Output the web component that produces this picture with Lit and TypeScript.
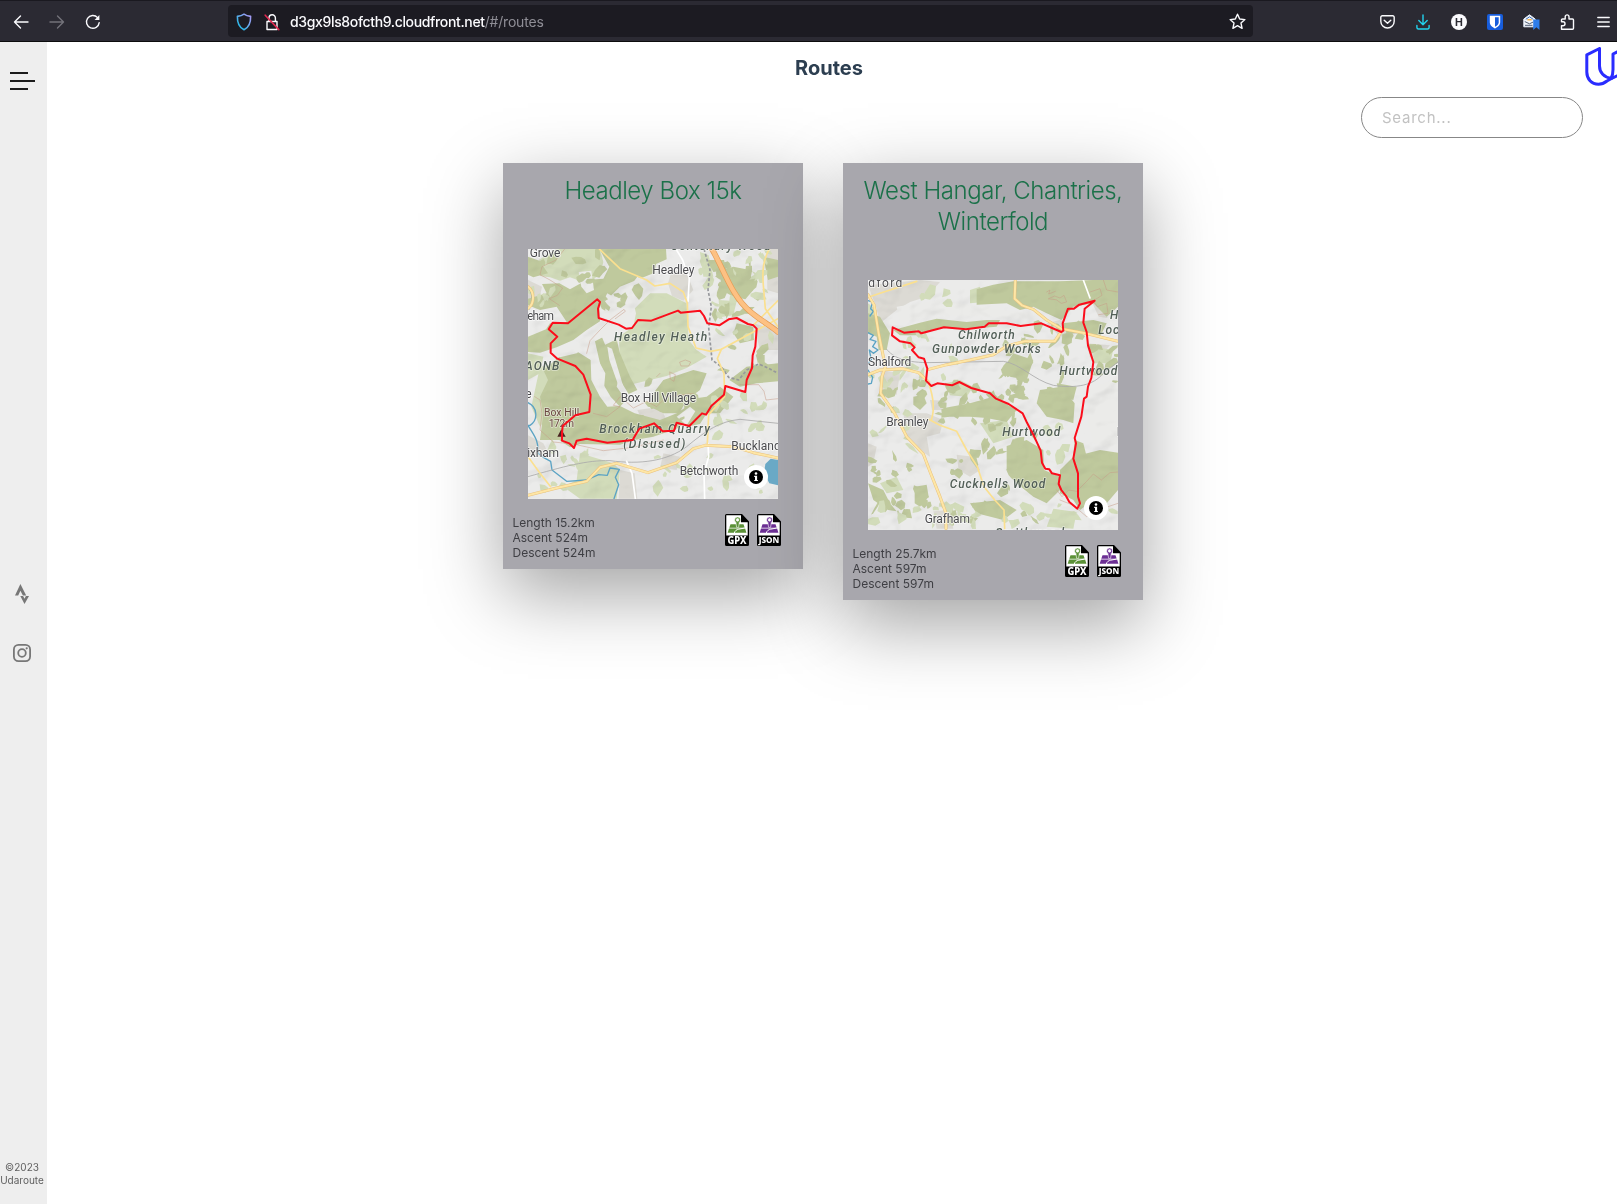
import { LitElement, html, svg, css, nothing } from "lit";
import { customElement, property } from "lit/decorators.js";

interface Label {
  text: string;
  x: number;
  y: number;
  width?: number;
  kind?: "place" | "area" | "peak";
}

interface RouteMap {
  top: number;
  wood: string[];
  field: string[];
  urban: string[];
  bare: string[];
  water: string[];
  lake: string[];
  contour: string[];
  rail: string[];
  boundary: string[];
  lane: string[];
  minor: string[];
  main: string[];
  motorway: string[];
  track: string;
  labels: Label[];
  peak?: string;
  seed: number;
  /** x, y, width, height, patch count, tone (0 wood, 1 field) */
  scatter: [number, number, number, number, number, number][];
}

interface Route {
  title: string;
  length: string;
  ascent: string;
  descent: string;
  map: RouteMap;
}

/** Small irregular patches (hedged fields, copses) spread over the given boxes. */
function scatterPatches(map: RouteMap) {
  let s = map.seed;
  const rnd = () => {
    s = (s * 16807) % 2147483647;
    return s / 2147483647;
  };
  const out: { d: string; tone: number }[] = [];
  for (const [x, y, w, h, count, tone] of map.scatter) {
    for (let i = 0; i < count; i++) {
      const cx = x + rnd() * w;
      const cy = y + rnd() * h;
      const rw = 8 + rnd() * 20;
      const rh = 5 + rnd() * 13;
      const turn = rnd() * Math.PI;
      const corners = 5 + Math.floor(rnd() * 4);
      const pts: string[] = [];
      for (let k = 0; k < corners; k++) {
        const a = ((k + rnd() * 0.5) / corners) * Math.PI * 2;
        const r = 0.55 + rnd() * 0.6;
        const px = Math.cos(a) * rw * r;
        const py = Math.sin(a) * rh * r;
        const qx = cx + px * Math.cos(turn) - py * Math.sin(turn);
        const qy = cy + px * Math.sin(turn) + py * Math.cos(turn);
        pts.push(`${qx.toFixed(0)},${qy.toFixed(0)}`);
      }
      out.push({ d: pts.join(" "), tone });
    }
  }
  return out;
}

const headley: RouteMap = {
  top: 27,
  seed: 4211,
  scatter: [
    [580, 60, 150, 180, 22, 0],
    [640, 30, 120, 330, 16, 1],
    [540, 60, 60, 250, 7, 1],
    [24, 620, 240, 150, 14, 1],
    [560, 470, 200, 120, 14, 1],
    [400, 640, 330, 130, 18, 1],
    [360, 410, 180, 130, 14, 0],
    [580, 320, 160, 90, 10, 0],
    [60, 40, 200, 120, 9, 0],
    [200, 100, 180, 120, 8, 0],
    [30, 140, 80, 70, 6, 1],
  ],
  wood: [
    "238,27 438,27 440,58 408,72 404,98 380,124 352,110 330,140 290,176 262,160 238,204 240,244 200,270 160,300 110,322 60,338 24,336 24,290 78,268 90,250 140,246 110,200 60,210 24,196 24,176 80,160 66,132 118,130 150,148 200,120 250,116 268,80",
    "24,50 58,62 84,100 40,112 24,104",
    "118,350 170,334 212,360 214,420 240,470 262,500 300,498 344,520 420,540 470,520 500,500 520,530 470,566 400,590 344,600 300,614 180,612 150,622 118,600 60,600 70,520 60,470 84,420 70,390",
    "224,300 246,292 262,330 290,350 300,400 290,440 318,480 300,500 272,470 248,430 240,370",
    "240,322 290,298 300,340 330,410 352,450 326,462 300,420 262,380",
    "430,420 520,390 560,400 540,450 500,480 478,520 430,520 390,500 400,460",
    "600,92 640,80 690,90 700,150 676,178 640,170 604,150",
    "680,380 774,370 774,424 710,430 660,440 628,420",
    "490,480 560,470 600,440 640,470 600,520 560,520 540,552 500,560",
    "560,60 612,60 620,90 580,96",
    "730,50 774,60 774,110 744,120",
    "650,250 700,260 702,300 660,310 640,280",
  ],
  field: [
    "56,60 110,27 240,27 250,66 240,104 200,130 150,112 120,122 90,112 60,108",
    "340,186 390,160 440,160 500,190 506,300 530,330 560,350 500,384 440,408 330,434 300,350 296,290 340,260 348,220",
    "60,380 110,372 100,440 120,480 90,520 60,560 34,500",
    "180,640 280,670 300,690 290,776 180,776 130,740 170,720",
    "540,36 566,46 580,110 550,110",
    "596,180 650,184 640,226 600,232",
    "24,340 70,350 60,400 24,420",
  ],
  urban: [
    "456,90 500,100 520,150 490,182 456,168 444,130",
    "24,120 66,140 60,168 24,180",
    "740,27 774,27 774,160 742,150",
    "352,510 420,500 440,540 370,550",
    "300,690 344,700 352,776 296,776",
    "700,250 774,270 774,330 720,330",
    "24,586 70,610 90,650 24,650",
    "430,640 480,650 470,690 420,684",
  ],
  bare: [
    "300,140 350,120 400,100 400,150 360,190 300,250 250,230 250,190",
    "100,330 160,318 200,290 240,250 300,250 270,280 210,312 170,340 120,352",
    "196,320 212,318 256,400 250,470 240,460 234,410",
    "262,320 276,326 316,460 340,490 320,500 300,450 268,360",
    "470,530 510,500 526,514 500,556",
    "176,96 214,92 222,150 200,160 184,140",
  ],
  water: [
    "M24,140 C40,160 40,190 26,208",
    "M24,488 C52,500 56,540 30,556 L24,556 C44,590 56,600 54,640 L70,652 L92,664 L96,690 L140,724 L200,720 L236,704 L262,706 L270,684 L298,688 L286,712 L296,734 L282,776",
  ],
  lake: ["736,672 752,656 774,660 774,736 748,730 732,700"],
  contour: [
    "M134,27 L108,60 L66,80 L60,104 L90,120 L128,144 L112,166 L88,176 L118,196",
    "M200,340 L210,302 L240,270 L270,240 L312,208 L316,214 L286,236",
    "M44,470 L60,480 L66,520 L60,570 L100,606 L160,612 L250,632 L340,622 L430,600",
    "M220,520 L260,530 L300,500 L280,496 L300,470 L340,504 L380,484 L410,500 L440,470 L520,460",
    "M410,410 L420,400 M450,396 L466,404 L462,424 L452,418Z M480,366 L496,360 L512,366 L506,378 L484,378Z",
    "M660,434 L716,434 L732,454 L738,480 L774,476",
  ],
  rail: ["M24,710 C130,680 200,660 270,662 C360,674 440,664 500,620 C560,570 600,544 660,538 L774,550"],
  boundary: [
    "M552,27 L570,90 L564,150 L574,200 L566,262 L574,340 L576,360 L604,380 L626,412 L656,420 L680,390 L716,372 L744,384 L774,400",
  ],
  lane: ["M468,27 L488,60 L496,84 L508,112 L504,184", "M554,776 L552,700 L566,650 L564,610", "M320,664 L336,700 L346,776"],
  minor: [
    "M238,27 L300,86 L380,120 L404,138 L450,130 L490,156 L502,190 L504,260 L528,324 L572,334 L604,328 L774,236",
    "M748,27 C730,60 726,90 730,136 L736,206 L774,260",
    "M774,182 L700,256",
    "M604,328 L592,356 L612,400 L614,470 L566,524 L562,610",
    "M24,650 L60,700 L92,740",
  ],
  main: ["M24,766 L110,744 L200,724 L240,682 L290,670 L384,698 L470,668 L520,626 L556,616 L640,620 L700,638 L774,654", "M24,140 C44,156 44,190 24,206"],
  motorway: ["M576,27 C612,90 636,170 690,214 C720,240 750,256 774,276"],
  track:
    "M126,580 L126,602 L148,610 L162,624 L170,602 L200,596 L262,608 L338,600 L346,586 L358,566 L402,550 L428,574 L462,572 L470,548 L508,558 L546,520 L558,524 L574,498 L612,464 L616,438 L676,456 L680,420 L696,384 L698,346 L706,320 L710,266 L700,256 L684,252 L650,234 L626,238 L598,256 L562,250 L552,228 L540,212 L482,218 L474,212 L394,242 L354,240 L336,264 L318,266 L296,254 L236,234 L234,206 L240,186 L232,178 L144,250 L98,248 L86,268 L112,290 L92,310 L92,338 L112,356 L166,378 L190,404 L212,464 L208,516 L166,526 L128,558 Z",
  peak: "112,590 124,568 137,590",
  labels: [
    { text: "Grove", x: 29, y: 49, width: 92 },
    { text: "Headley", x: 397, y: 101, width: 126 },
    { text: "Centenary Wood", x: 452, y: 28, width: 300, kind: "area" },
    { text: "eham", x: 22, y: 238, width: 80 },
    { text: "Headley Heath", x: 282, y: 303, width: 280, kind: "area" },
    { text: "AONB", x: 15, y: 388, width: 103, kind: "area" },
    { text: "e", x: 16, y: 474 },
    { text: "Box Hill Village", x: 302, y: 484, width: 226 },
    { text: "Box Hill", x: 72, y: 528, width: 106, kind: "peak" },
    { text: "172m", x: 86, y: 559, width: 76, kind: "peak" },
    { text: "Brockham Quarry", x: 238, y: 579, width: 332, kind: "area" },
    { text: "(Disused)", x: 310, y: 624, width: 186, kind: "area" },
    { text: "ixham", x: 22, y: 651, width: 95 },
    { text: "Buckland", x: 634, y: 630, width: 148 },
    { text: "Betchworth", x: 479, y: 703, width: 176 },
  ],
};

const hangar: RouteMap = {
  top: 30,
  seed: 918,
  scatter: [
    [240, 350, 250, 110, 26, 0],
    [420, 260, 190, 130, 22, 0],
    [60, 340, 140, 90, 10, 0],
    [30, 560, 180, 200, 24, 0],
    [250, 540, 290, 220, 22, 0],
    [430, 200, 200, 80, 12, 0],
    [690, 220, 80, 130, 9, 0],
    [30, 300, 130, 260, 13, 1],
    [120, 190, 170, 150, 14, 1],
    [360, 440, 170, 180, 14, 0],
    [500, 160, 180, 60, 10, 0],
    [30, 700, 730, 70, 26, 1],
    [180, 60, 120, 80, 5, 1],
    [560, 440, 90, 120, 5, 1],
  ],
  wood: [
    "350,58 400,44 460,34 600,34 700,30 774,30 774,110 740,140 700,100 640,110 604,150 560,130 520,110 480,120 440,100 350,104",
    "100,180 180,158 230,146 320,156 380,150 420,150 410,170 330,176 240,172 180,196 120,196",
    "24,130 60,140 90,190 80,240 56,240 50,200 24,190",
    "440,528 500,510 550,540 552,600 600,620 600,660 560,700 520,680 470,640 440,600",
    "600,600 640,560 720,540 774,548 774,660 740,700 700,690 660,720 640,690 600,670",
    "640,560 644,510 670,520 680,560",
    "540,360 604,350 644,400 640,460 610,450 560,440 530,400",
    "252,414 330,400 400,380 470,420 440,456 380,444 330,440 260,440",
    "606,160 700,150 740,160 720,200 660,190 620,190",
    "160,380 190,374 200,400 180,420 160,404",
    "460,250 520,270 500,330 450,320 440,280",
    "24,640 70,660 90,700 110,724 84,720 40,690",
    "164,650 200,644 206,680 180,710 164,700",
    "330,700 420,690 470,720 430,750 350,730",
    "590,340 650,350 640,390 600,380",
  ],
  field: [
    "330,60 360,50 372,96 330,100",
    "256,340 300,330 340,350 320,380 270,376",
    "60,640 110,620 130,660 80,670",
    "580,716 650,726 640,776 560,770",
    "24,100 50,120 40,160 24,160",
    "360,460 440,450 460,500 400,520",
    "700,230 760,240 750,280 700,280",
  ],
  urban: [
    "24,46 180,30 240,36 200,80 150,96 110,120 60,160 48,110",
    "60,300 120,310 110,374 70,366",
    "130,430 200,430 250,450 240,490 200,500 210,560 180,540 140,500",
    "290,554 340,560 360,600 330,620 296,600",
    "24,520 50,530 40,580 24,590",
    "210,390 258,392 250,420 216,420",
    "560,160 600,150 660,190 600,200",
    "680,220 750,226 720,260 690,262",
    "690,84 738,84 742,144 716,140",
    "220,724 270,720 280,776 230,776",
  ],
  bare: ["110,110 240,90 420,120 540,130 520,146 400,140 220,136 120,160", "690,360 774,320 774,540 700,520 680,440"],
  water: [
    "M24,92 L38,96 L32,116 L40,124 L30,138",
    "M24,188 L40,196 L30,208 L48,214 L38,230 L54,240 L40,250 L28,240 L34,270 L24,280",
    "M24,300 L38,322 L34,340 L24,342",
  ],
  lake: [],
  contour: [
    "M560,66 L570,60 L566,72 L586,64 M566,86 L584,78 L600,84 L612,76 L620,96 L604,100 L590,90 Z",
    "M690,66 L720,56 L726,76 L700,92 L712,110 L740,100 L744,130 L716,134",
    "M590,660 L606,680 L626,660 L650,664 L680,634 L700,612 L724,630 L750,608 L774,606",
    "M600,690 L640,706 L680,740 L714,720 L774,700",
    "M730,30 L740,60 L774,66",
  ],
  rail: ["M80,238 C100,262 130,276 200,278 L430,274 C480,280 520,330 580,346 C650,356 700,346 730,310 L774,276"],
  boundary: [],
  lane: ["M670,30 L690,84"],
  minor: [
    "M214,450 C224,420 220,380 206,340",
    "M206,448 L240,466 L290,484 L320,540 L352,590 L372,650 L404,690 L432,720 L434,776",
    "M24,82 L60,70 L170,34",
  ],
  main: [
    "M24,74 L42,104 L56,190 L76,290 L66,320 L62,370 L104,430 L140,500 L190,552 L212,610 L240,680 L258,730 L258,776",
    "M24,314 L60,300 L128,296 L176,308 L206,336",
    "M206,298 L260,284 L330,270 L400,254 L440,228 L494,214 L584,214 L604,184",
    "M466,30 L464,86 L486,106 L520,118 L560,150 L604,176 L676,190 L774,214",
  ],
  motorway: [],
  track:
    "M98,172 L132,188 L176,184 L184,190 L252,172 L318,178 L374,170 L386,160 L440,160 L482,168 L544,160 L604,186 L610,182 L608,160 L624,116 L642,116 L658,104 L704,92 L674,116 L670,158 L680,186 L684,226 L700,276 L694,324 L684,350 L680,380 L672,386 L664,440 L644,504 L648,520 L640,566 L654,610 L654,680 L660,700 L652,716 L628,696 L618,678 L604,660 L596,642 L600,616 L576,610 L568,598 L556,596 L546,578 L542,542 L520,494 L500,456 L488,430 L446,402 L408,386 L390,370 L334,354 L298,336 L276,346 L232,340 L214,348 L198,332 L202,296 L192,266 L176,262 L156,240 L164,232 L152,220 L120,214 L96,196 Z",
  labels: [
    { text: "dford", x: 25, y: 49, width: 102 },
    { text: "Chilworth", x: 294, y: 206, width: 170, kind: "area" },
    { text: "Gunpowder Works", x: 216, y: 249, width: 326, kind: "area" },
    { text: "H", x: 750, y: 147, kind: "area" },
    { text: "Loc", x: 715, y: 190, width: 62, kind: "area" },
    { text: "Shalford", x: 24, y: 288, width: 130 },
    { text: "Hurtwood", x: 598, y: 315, width: 174, kind: "area" },
    { text: "Bramley", x: 79, y: 468, width: 126 },
    { text: "Hurtwood", x: 427, y: 498, width: 174, kind: "area" },
    { text: "H", x: 770, y: 498, kind: "place" },
    { text: "Cucknells Wood", x: 269, y: 652, width: 287, kind: "area" },
    { text: "Grafham", x: 194, y: 758, width: 136 },
    { text: "Smithwood", x: 406, y: 800, width: 206, kind: "area" },
  ],
};

const routes: Route[] = [
  { title: "Headley Box 15k", length: "15.2km", ascent: "524m", descent: "524m", map: headley },
  { title: "West Hangar, Chantries, Winterfold", length: "25.7km", ascent: "597m", descent: "597m", map: hangar },
];

@customElement("route-map")
class RouteMapView extends LitElement {
  @property({ attribute: false }) map!: RouteMap;

  static styles = css`
    :host { display: block; width: 250px; height: 250px; position: relative; }
    .canvas { display: block; width: 250px; height: 250px; background: #ebebea; }
    .wood { fill: #bfc99d; }
    .field { fill: #d2dcba; }
    .urban { fill: #dcdad4; }
    .bare { fill: #ebebe9; }
    .lake { fill: #6aa9c6; }
    .line { fill: none; stroke-linejoin: round; stroke-linecap: round; }
    .water { stroke: #5ba3c4; stroke-width: 4; }
    .contour { stroke: #c79a86; stroke-width: 2; opacity: 0.75; }
    .rail { stroke: #a9a9a9; stroke-width: 2.5; }
    .boundary { stroke: #96989c; stroke-width: 5; stroke-dasharray: 9 6; stroke-linecap: butt; }
    .lane { stroke: #fff; stroke-width: 5; }
    .minor { stroke: #fbe08f; stroke-width: 5; }
    .case { stroke: #e9c27e; stroke-width: 9; }
    .main { stroke: #fee6a5; stroke-width: 6; }
    .mcase { stroke: #e49b55; stroke-width: 17; }
    .motorway { stroke: #fdc183; stroke-width: 13; }
    .track { stroke: #fb0d1b; stroke-width: 6; }
    .peak-mark { fill: #4a2420; }
    .relief { opacity: 0.16; mix-blend-mode: multiply; }
    .label {
      font-family: Roboto, "Liberation Sans", sans-serif;
      paint-order: stroke; stroke: rgba(255, 255, 255, 0.75); stroke-width: 5; stroke-linejoin: round;
    }
    .place { font-size: 36px; fill: #4b4b4e; }
    .area { font-size: 36px; font-style: italic; font-weight: 500; fill: #525f57; stroke: rgba(255, 255, 255, 0.45); }
    .peak { font-size: 31px; fill: #6b4640; stroke: rgba(255, 255, 255, 0.5); }
    .info {
      position: absolute; right: 10px; bottom: 10px; width: 24px; height: 24px; padding: 0;
      border: 0; border-radius: 50%; background: #fff; display: grid; place-items: center;
    }
  `;

  private lines(kind: string, paths: string[]) {
    return paths.map((d) => svg`<path class="line ${kind}" d=${d}></path>`);
  }

  private areas(kind: string, shapes: string[]) {
    return shapes.map((p) => svg`<polygon class=${kind} points=${p}></polygon>`);
  }

  render() {
    const m = this.map;
    return html`
      <svg class="canvas" viewBox="24 ${m.top} 750 750">
        <defs>
          <filter id="relief" x="0" y="0" width="100%" height="100%">
            <feTurbulence type="fractalNoise" baseFrequency="0.009 0.012" numOctaves="3" seed=${m.seed % 97}></feTurbulence>
            <feDiffuseLighting surfaceScale="26" diffuseConstant="1.15" lighting-color="#fff">
              <feDistantLight azimuth="225" elevation="58"></feDistantLight>
            </feDiffuseLighting>
          </filter>
        </defs>
        ${this.areas("urban", m.urban)} ${this.areas("field", m.field)} ${this.areas("wood", m.wood)}
        ${this.areas("bare", m.bare)}
        ${scatterPatches(m).map((p) => svg`<polygon class=${p.tone ? "field" : "wood"} points=${p.d}></polygon>`)}
        <rect class="relief" x="24" y=${m.top} width="750" height="750" filter="url(#relief)"></rect>
        ${this.areas("lake", m.lake)} ${this.lines("contour", m.contour)} ${this.lines("water", m.water)}
        ${this.lines("rail", m.rail)} ${this.lines("boundary", m.boundary)} ${this.lines("lane", m.lane)}
        ${this.lines("minor", m.minor)} ${this.lines("case", m.main)} ${this.lines("main", m.main)}
        ${this.lines("mcase", m.motorway)} ${this.lines("motorway", m.motorway)}
        ${m.labels.map(
          (l) => svg`<text class="label ${l.kind ?? "place"}" x=${l.x} y=${l.y + 1} textLength=${l.width ?? nothing}>${l.text}</text>`,
        )}
        ${m.peak ? svg`<polygon class="peak-mark" points=${m.peak}></polygon>` : nothing}
        ${this.lines("track", [m.track])}
      </svg>
      <button class="info" aria-label="Info">
        <svg width="14" height="14" viewBox="0 0 14 14">
          <circle cx="7" cy="7" r="7" fill="#000"></circle>
          <circle cx="7" cy="3.5" r="1.3" fill="#fff"></circle>
          <path d="M5.200 5.700h2.900v4.200h.8v1.200H5.200V9.900h.8V6.900h-.8z" fill="#fff"></path>
        </svg>
      </button>
    `;
  }
}

@customElement("file-icon")
class FileIcon extends LitElement {
  @property() label = "";
  @property() tint = "";

  static styles = css`
    :host { display: block; width: 24px; height: 32px; }
    .icon { display: block; }
    .text { font-family: "Noto Sans", Inter, sans-serif; font-weight: 800; fill: #fff; }
  `;

  render() {
    const wide = this.label.length > 3;
    return html`<svg class="icon" width="24" height="32" viewBox="0 0 24 32">
      <path d="M1.500 0H17l7 7.500V30.500a1.500 1.500 0 0 1-1.500 1.500h-21A1.500 1.500 0 0 1 0 30.500v-29A1.500 1.500 0 0 1 1.500 0z" fill="#000"></path>
      <path d="M1.300 1.300H16V8.200h6.700V21.500H1.300z" fill="#fff"></path>
      <g fill=${this.tint}>
        <path d="M5.500 10.300h13l1.200 3.400H4.300zM4 14.500h16.100l1.300 4.300H2.700z"></path>
        <path d="M12.600 2.900a3 3 0 0 1 1.700 5.500l-.7 5h-2L10.900 8.400a3 3 0 0 1 1.700-5.500zm0 1.700a1.300 1.300 0 1 0 0 2.600 1.300 1.300 0 0 0 0-2.600z" fill-rule="evenodd" stroke="#fff" stroke-width="0.600"></path>
      </g>
      <path d="M9.300 19c.8-2.600 2.300-3.300 4.400-3.800l6-1.200" stroke="#fff" stroke-width="1" fill="none"></path>
      <text class="text" x="12" y=${wide ? 29.4 : 30.2} text-anchor="middle" font-size=${wide ? 8 : 10.4}
        textLength=${wide ? 20.6 : 19} lengthAdjust="spacingAndGlyphs">${this.label}</text>
    </svg>`;
  }
}

@customElement("route-card")
class RouteCard extends LitElement {
  @property({ attribute: false }) route!: Route;

  static styles = css`
    :host {
      display: flex; flex-direction: column; width: 300px; box-sizing: border-box;
      background: #a8a7ad; box-shadow: rgba(0, 0, 0, 0.36) 0 25px 70px 0;
    }
    .title {
      margin: 0; padding: 12px 10px 43px; text-align: center; color: #1b7149;
      font: 300 24px/31px Inter, "Liberation Sans", sans-serif; letter-spacing: -0.45px;
    }
    .map { align-self: center; }
    .foot { display: flex; justify-content: space-between; padding: 15px 22px 9px 9.5px; }
    .stats { margin-top: 1px; font: 400 12px/15px Inter, sans-serif; color: #3f3f44; letter-spacing: 0; }
    .files { display: flex; gap: 8px; }
  `;

  render() {
    const r = this.route;
    return html`
      <h2 class="title">${r.title}</h2>
      <route-map class="map" .map=${r.map}></route-map>
      <div class="foot">
        <div class="stats">
          <div>Length ${r.length}</div>
          <div>Ascent ${r.ascent}</div>
          <div>Descent ${r.descent}</div>
        </div>
        <div class="files">
          <file-icon label="GPX" tint="#5b9137"></file-icon>
          <file-icon label="JSON" tint="#6c2f94"></file-icon>
        </div>
      </div>
    `;
  }
}

@customElement("browser-bar")
class BrowserBar extends LitElement {
  static styles = css`
    :host {
      display: flex; align-items: center; height: 42px; box-sizing: border-box; background: #2b2a33;
      border-top: 1px solid #1a1920; border-bottom: 1px solid #0c0c0d; padding-left: 3px; overflow: hidden;
      color: #fbfbfe;
    }
    .btn { flex: none; width: 36px; display: grid; place-items: center; padding-top: 1px; }
    .dim { color: #73727a; }
    .cyan { color: #22d3ee; }
    .stroke { fill: none; stroke: currentColor; stroke-width: 1.4; stroke-linecap: round; stroke-linejoin: round; }
    .address {
      flex: none; display: flex; align-items: center; width: 1025px; height: 32px; box-sizing: border-box;
      margin: 0 116px 0 117px; padding: 1px 7px 0 8px; border-radius: 4px; background: #1c1b22;
    }
    .lock { margin-left: 12px; }
    .url { margin-left: 10px; padding-top: 1px; font: 500 14px/20px Inter, sans-serif; letter-spacing: -0.35px; flex: 1; }
    .path { color: #8f8e96; font-weight: 400; letter-spacing: -0.2px; }
    .glyph { font: 700 10.500px Inter, sans-serif; fill: #2b2a33; }
  `;

  render() {
    return html`
      <div class="btn"><svg class="stroke" width="16" height="16" viewBox="0 0 16 16"><path d="M15 8H1.500M7.500 2l-6 6 6 6"></path></svg></div>
      <div class="btn dim"><svg class="stroke" width="16" height="16" viewBox="0 0 16 16"><path d="M1 8h13.500M8.500 2l6 6-6 6"></path></svg></div>
      <div class="btn"><svg class="stroke" width="16" height="16" viewBox="0 0 16 16"><path d="M14.200 8.600A6.400 6.400 0 1 1 12.600 3.600"></path><path d="M14.400 1v5H9.600z" fill="currentColor" stroke="none"></path></svg></div>
      <div class="address">
        <svg class="stroke" width="16" height="18" viewBox="0 0 16 18">
          <defs><linearGradient id="sh" x1="0" y1="1" x2="1" y2="0"><stop offset="0.2" stop-color="#2bb7e6"></stop><stop offset="0.9" stop-color="#a49bf5"></stop></linearGradient></defs>
          <path d="M8 1.200C6.400 2.400 4 3.200 1.400 3.400c-.2 6 1.600 11 6.600 13.400 5-2.400 6.800-7.400 6.600-13.400C12 3.200 9.600 2.400 8 1.200z" stroke="url(#sh)" stroke-width="1.600"></path>
        </svg>
        <svg class="stroke lock" width="16" height="18" viewBox="0 0 16 18">
          <path d="M3 8.500h10v8H3zM5 8.500V5a3.200 3.200 0 0 1 6.400 0v3.500"></path>
          <path d="M1.200 2.200l13.600 14.400" stroke="#e22850" stroke-width="1.600"></path>
        </svg>
        <span class="url">d3gx9ls8ofcth9.cloudfront.net<span class="path">/#/routes</span></span>
        <svg class="stroke" width="17" height="17" viewBox="0 0 17 17"><path d="M8.500 1.200l2.200 4.800 5.200.6-3.900 3.500 1.100 5.200-4.600-2.700-4.600 2.700L5 10.100 1.100 6.600 6.300 6z"></path></svg>
      </div>
      <div class="btn"><svg class="stroke" width="15" height="14" viewBox="0 0 15 14"><path d="M2.300.8h10.400a1.500 1.500 0 0 1 1.500 1.500v4a6.700 6.700 0 0 1-13.400 0v-4A1.500 1.500 0 0 1 2.300.8zM4.200 5.200l3.300 3.100 3.300-3.100"></path></svg></div>
      <div class="btn cyan"><svg class="stroke" width="14" height="16" viewBox="0 0 14 16"><path d="M7 1v9.500M2.800 6.500L7 10.700l4.200-4.200M.9 11.500v2a1.500 1.500 0 0 0 1.500 1.500h9.200a1.500 1.500 0 0 0 1.500-1.500v-2"></path></svg></div>
      <div class="btn"><svg width="16" height="16" viewBox="0 0 16 16"><circle cx="8" cy="8" r="8" fill="#fbfbfe"></circle><text class="glyph" x="8" y="11.800" text-anchor="middle">H</text></svg></div>
      <div class="btn"><svg width="16" height="16" viewBox="0 0 16 16"><rect width="16" height="16" rx="2" fill="#175ddc"></rect><path d="M2.800 1.800h10.400v6.400c0 3-2.600 4.900-5.200 6.200-2.600-1.300-5.200-3.200-5.200-6.200z" fill="#fff"></path><path d="M8 3.300h3.700v4.900c0 2-1.800 3.500-3.700 4.500z" fill="#175ddc"></path></svg></div>
      <div class="btn"><svg width="17" height="16" viewBox="0 0 17 16" fill="none">
        <path d="M.8 5L6.500.8 12.200 5v7.800H.8z" fill="#f3f6fb" stroke="#e4ecf8"></path>
        <path d="M2.800 5.300L6.500 2.800l3.700 2.500" stroke="#3c6eb4"></path><path d="M4.300 5.800h4.400" stroke="#f0a42c" stroke-width="1.200"></path>
        <path d="M1.800 7.600l4.700 2.200 3.500-1.700M2 11.300h7.500" stroke="#3b4a63" stroke-width="0.900"></path><path d="M10.200 5.500h6.300v10.500l-3.150-2.800-3.150 2.800z" fill="#2f7de9"></path></svg></div>
      <div class="btn"><svg class="stroke" width="15" height="16" viewBox="0 0 15 16"><path d="M1.500 15.200h11a1 1 0 0 0 1-1V6a1 1 0 0 0-1-1H9V2.800a1.900 1.900 0 0 0-3.800 0V5H2.500a1 1 0 0 0-1 1v1.800H3a2 2 0 0 1 0 4H1.500z"></path></svg></div>
      <div class="btn"><svg class="stroke" width="13" height="12" viewBox="0 0 13 12"><path d="M.8 1.500h11.400M.8 6h11.400M.8 10.500h11.400"></path></svg></div>
    `;
  }
}

@customElement("side-rail")
class SideRail extends LitElement {
  static styles = css`
    :host {
      flex: none; display: flex; flex-direction: column; width: 47px; box-sizing: border-box;
      background: #eee; padding: 30px 0 17px; color: #777;
    }
    .menu { display: flex; flex-direction: column; gap: 6px; padding-left: 10px; }
    .line { height: 2px; width: 18px; background: #1b1b1b; }
    .long { width: 25px; }
    .social { display: flex; flex-direction: column; align-items: center; gap: 40px; width: 44px; margin-top: 494px; }
    .glyph { display: block; }
    .note { margin-top: auto; width: 44px; text-align: center; white-space: nowrap; font: 400 10px/13px Inter, sans-serif; color: #5f5f5f; }
  `;

  render() {
    return html`
      <div class="menu"><div class="line"></div><div class="line long"></div><div class="line"></div></div>
      <div class="social">
        <svg class="glyph" width="14" height="20" viewBox="0 0 14 20" fill="#777">
          <path d="M5.400 0L11.200 11.500H7.900L5.400 6.700 3.200 11.500H0z"></path>
          <path d="M5.300 11.900h2.800l1.400 2.800 1.400-2.800H14L9.500 20z"></path>
        </svg>
        <svg class="glyph" width="18" height="18" viewBox="0 0 18 18" fill="none" stroke="#777" stroke-width="1.800">
          <rect x="0.900" y="0.900" width="16.200" height="16.200" rx="4.600"></rect>
          <circle cx="9" cy="9" r="3.800"></circle><circle cx="13.700" cy="4.300" r="1.100" fill="#777" stroke="none"></circle>
        </svg>
      </div>
      <div class="note">©2023<br />Udaroute</div>
    `;
  }
}

@customElement("app-root")
class AppRoot extends LitElement {
  static styles = css`
    :host {
      display: flex; flex-direction: column; width: 1617px; height: 1204px; overflow: hidden;
      background: #fff; font-family: Inter, "Liberation Sans", sans-serif;
    }
    .body { flex: 1; display: flex; min-height: 0; }
    .page { flex: 1; min-width: 0; display: flex; flex-direction: column; overflow: hidden; }
    .header { display: grid; grid-template-columns: 1fr auto 1fr; height: 55px; margin-left: -6px; align-items: start; }
    .heading { grid-column: 2; margin: 14px 0 0; font: 700 20px/24px Inter, sans-serif; color: #2c3e50; }
    .logo { justify-self: end; margin: 5px -9px 0 0; display: block; }
    .search { display: flex; justify-content: flex-end; padding-right: 34px; }
    .field {
      width: 222px; height: 41px; box-sizing: border-box; border: 1px solid #878787; border-radius: 21px;
      padding: 0 20px; font: 400 15px Inter, sans-serif; letter-spacing: 0.75px; background: #fff; outline: 0;
    }
    .field::placeholder { color: #c2c2c2; opacity: 1; }
    .cards { display: flex; align-items: flex-start; gap: 40px; margin: 25px 0 0 456px; }
  `;

  render() {
    return html`
      <browser-bar></browser-bar>
      <div class="body">
        <side-rail></side-rail>
        <main class="page">
          <header class="header">
            <h1 class="heading">Routes</h1>
            <svg class="logo" width="41" height="39" viewBox="0 0 41 39" fill="none" stroke="#2a2cff" stroke-width="3" stroke-linejoin="round">
              <path d="M1.800 7.800L14.500 1.500V19c0 6.500 4.500 11.500 12 12.500L22 34c-2.500 2-5.500 3.200-8.500 3.200C6.500 37.200 1.800 32 1.800 25z"></path>
              <path d="M26 31.500c1.500-2.500 2-5 2-9V7l12-6v17c0 7-7 11-14 13.500z"></path>
            </svg>
          </header>
          <div class="search"><input class="field" type="text" placeholder="Search..." /></div>
          <section class="cards">${routes.map((r) => html`<route-card .route=${r}></route-card>`)}</section>
        </main>
      </div>
    `;
  }
}
